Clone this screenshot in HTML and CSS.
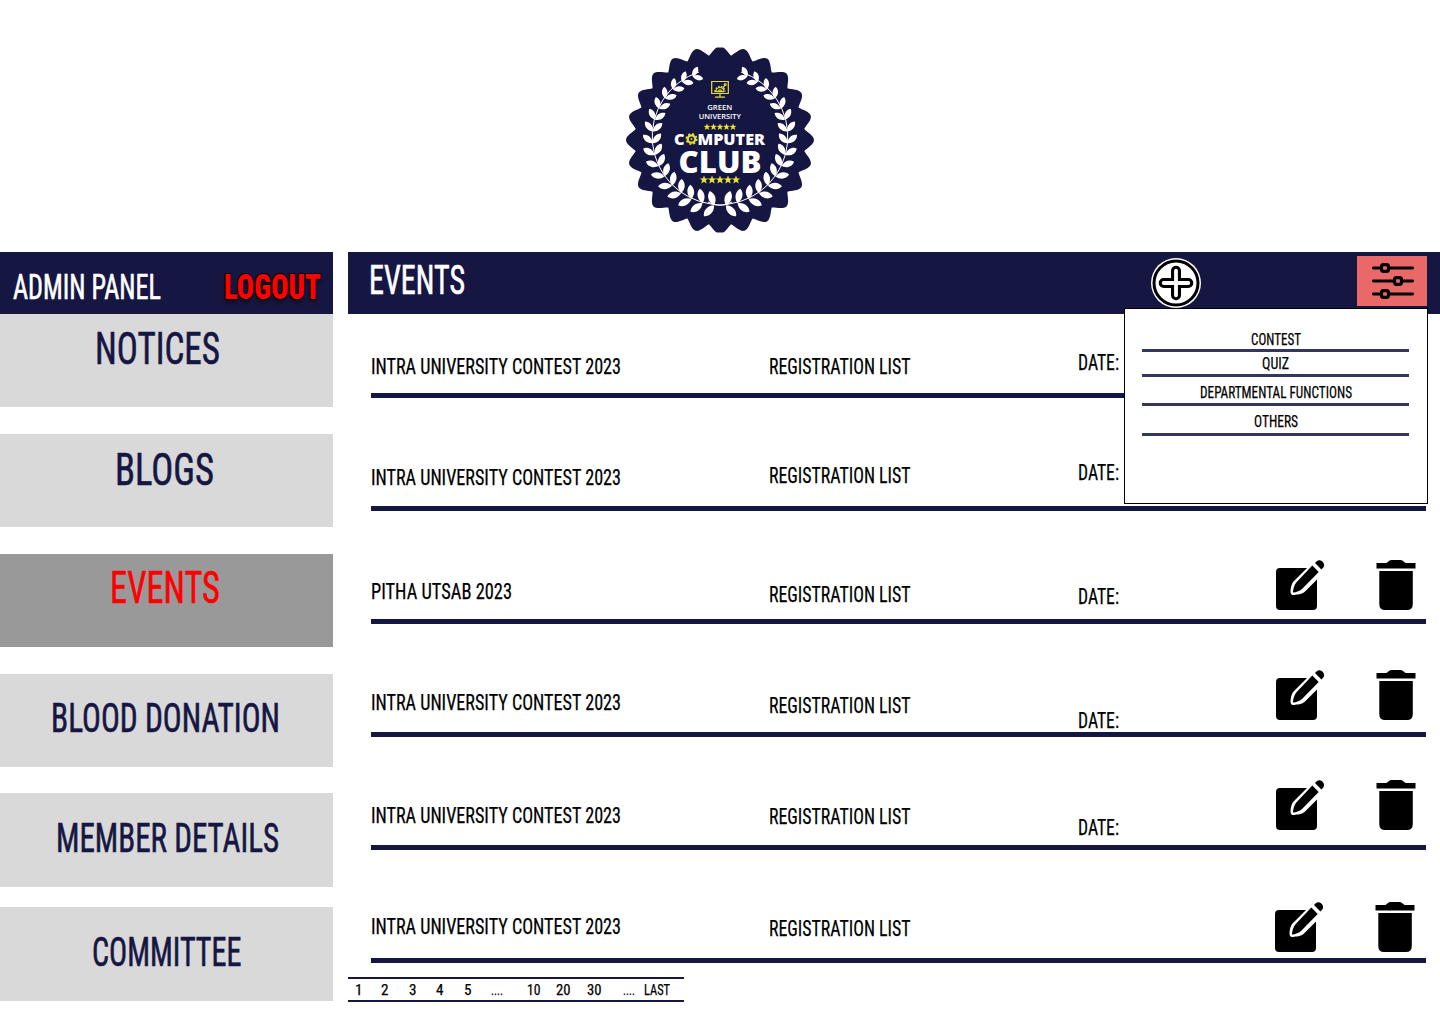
FILE: index.html
```html
<!DOCTYPE html>
<html lang="en">
<head>
<meta charset="utf-8">
<title>Computer Club – Events</title>
<link rel="stylesheet" href="styles.css">
</head>
<body>
<svg class="defs" width="0" height="0" aria-hidden="true">
  <symbol id="edit" viewBox="0 0 50 50">
    <path d="M4 8H31L17 22C15 25 14.500 29 14.500 32C15 35.500 17.500 35.500 20 34.500C23 34.500 26 34 28.500 32L41 19.500V46Q41 50 37 50H4Q0 50 0 46V12Q0 8 4 8Z"/>
    <path d="M36.300 5.500L42.700 11.900L26.500 28.500C24 31 20.500 32.300 16.900 32.500C17.200 28.700 18.200 25.200 20.500 22.200Z"/>
    <path d="M39 2.900L41 1.100C44.500-1.600 50 3.500 47.400 7.300L45.400 9.400Z"/>
  </symbol>
  <symbol id="trash" viewBox="0 0 40 50">
    <path d="M.500 3H10.500L13 .900Q14 0 15.500 0H24.500Q26 0 27 .900L29.500 3H39.500V8.500H.500Z"/>
    <path d="M3.300 11H36.800V44Q36.800 50 31 50H9Q3.300 50 3.300 44Z"/>
  </symbol>
  <symbol id="star" viewBox="-5 -5 10 10">
    <path d="M0-5L1.300-1.600L4.800-1.500L2 .300L3 4L0 2L-3 4L-2 .300L-4.800-1.500L-1.300-1.600Z"/>
  </symbol>
</svg>

<header class="brand">
  <svg class="logo" width="192" height="192" viewBox="-96 -96 192 192">
    <clipPath id="trim"><rect x="-96" y="-92.500" width="192" height="185"/></clipPath>
    <path id="seal" fill="#161642" clip-path="url(#trim)"/>
    <g id="laurel" fill="#fff"></g>
    <g fill="none" stroke="#fff" stroke-width="1">
      <path d="M-21-68A68 68 0 0 0-9 64Q3 67 12 62"/>
      <path d="M21-68A68 68 0 0 1 9 64Q-3 67-12 62"/>
    </g>
    <g fill="none" stroke="#e3df35" stroke-width="1.200">
      <path d="M-8.300-58.500H8.300V-46.500H-8.300ZM0-46.500V-43M-5-42.800H5"/>
      <path d="M-5.500-48.300H4M-4-48.500A4 4 0 0 1 4-48.500M-1.600-48.500A1.600 1.600 0 0 1 1.600-48.500"/>
      <path stroke-width="1.500" stroke-dasharray="1.500 1.400" d="M-5-48.500A5 5 0 0 1 5-48.500"/>
      <circle cx="5.200" cy="-55.500" r="1"/><path d="M3-52L4.700-54.600"/>
    </g>
    <g class="logo-text" fill="#fff">
      <text class="small" x="-12.800" y="-30.500" textLength="25" lengthAdjust="spacingAndGlyphs">GREEN</text>
      <text class="small" x="-21.300" y="-21.400" textLength="42.300" lengthAdjust="spacingAndGlyphs">UNIVERSITY</text>
      <text class="mid" x="-46" y="5.300" textLength="10.500" lengthAdjust="spacingAndGlyphs">C</text>
      <text class="mid" x="-22.500" y="5.300" textLength="67.500" lengthAdjust="spacingAndGlyphs">MPUTER</text>
      <text class="big" x="-41.500" y="32.700" textLength="83" lengthAdjust="spacingAndGlyphs">CLUB</text>
    </g>
    <g fill="none" stroke="#e3df35">
      <circle cx="-28.500" cy="-1" r="3.700" stroke-width="2.200"/>
      <circle cx="-28.500" cy="-1" r="5.200" stroke-width="1.600" stroke-dasharray="2 2.084"/>
      <circle cx="-28.500" cy="-1" r="1" fill="#e3df35" stroke="none"/>
    </g>
    <g fill="#e9e52f" id="stars"></g>
  </svg>
</header>

<div class="layout">
  <nav class="side">
    <div class="side-head">
      <span class="fit admin">ADMIN PANEL</span>
      <span class="fit logout">LOGOUT</span>
    </div>
    <a class="item notices"><span class="fit">NOTICES</span></a>
    <a class="item blogs"><span class="fit">BLOGS</span></a>
    <a class="item current"><span class="fit">EVENTS</span></a>
    <a class="item blood"><span class="fit">BLOOD DONATION</span></a>
    <a class="item member"><span class="fit">MEMBER DETAILS</span></a>
    <a class="item committee"><span class="fit">COMMITTEE</span></a>
  </nav>

  <main class="main">
    <div class="bar">
      <h1 class="fit title">EVENTS</h1>
      <svg class="add" width="50" height="50" viewBox="-25 -25 50 50">
        <circle r="25" fill="#fff"/>
        <circle r="22" fill="none" stroke="#000" stroke-width="3"/>
        <path d="M0-12.300V12.300M-12.300 0H12.300" stroke="#000" stroke-width="10" stroke-linecap="round"/>
        <path d="M0-12.300V12.300M-12.300 0H12.300" stroke="#fff" stroke-width="3.800" stroke-linecap="round"/>
      </svg>
      <div class="filter">
        <svg width="70" height="50" viewBox="0 0 70 50" fill="#e96868" stroke="#000" stroke-linecap="round">
          <path stroke-width="2.800" d="M16.400 12H55.600M16.400 25H55.600M16.400 38H55.600"/>
          <g stroke-width="3.200">
            <rect x="24.500" y="8.700" width="7" height="6.600" rx="2"/>
            <rect x="37.500" y="21.700" width="7" height="6.600" rx="2"/>
            <rect x="24.500" y="34.700" width="7" height="6.600" rx="2"/>
          </g>
        </svg>
      </div>
      <div class="menu">
        <div class="option contest"><span class="fit">CONTEST</span></div>
        <div class="option quiz"><span class="fit">QUIZ</span></div>
        <div class="option dept"><span class="fit">DEPARTMENTAL FUNCTIONS</span></div>
        <div class="option others"><span class="fit">OTHERS</span></div>
      </div>
    </div>

    <div class="rows">
      <div class="row r1"><span class="fit name">INTRA UNIVERSITY CONTEST 2023</span><span class="fit reg">REGISTRATION LIST</span><span class="fit date">DATE:</span></div>
      <div class="row r2"><span class="fit name">INTRA UNIVERSITY CONTEST 2023</span><span class="fit reg">REGISTRATION LIST</span><span class="fit date">DATE:</span></div>
      <div class="row r3"><span class="fit name short">PITHA UTSAB 2023</span><span class="fit reg">REGISTRATION LIST</span><span class="fit date">DATE:</span><svg class="edit"><use href="#edit"/></svg><svg class="trash"><use href="#trash"/></svg></div>
      <div class="row r4"><span class="fit name">INTRA UNIVERSITY CONTEST 2023</span><span class="fit reg">REGISTRATION LIST</span><span class="fit date">DATE:</span><svg class="edit"><use href="#edit"/></svg><svg class="trash"><use href="#trash"/></svg></div>
      <div class="row r5"><span class="fit name">INTRA UNIVERSITY CONTEST 2023</span><span class="fit reg">REGISTRATION LIST</span><span class="fit date">DATE:</span><svg class="edit"><use href="#edit"/></svg><svg class="trash"><use href="#trash"/></svg></div>
      <div class="row r6"><span class="fit name">INTRA UNIVERSITY CONTEST 2023</span><span class="fit reg">REGISTRATION LIST</span><span></span><svg class="edit"><use href="#edit"/></svg><svg class="trash"><use href="#trash"/></svg></div>
    </div>

    <div class="pages">
      <span class="fit">1</span><span class="fit">2</span><span class="fit">3</span><span class="fit">4</span><span class="fit">5</span><span class="fit">....</span><span class="fit">10</span><span class="fit">20</span><span class="fit">30</span><span class="fit">....</span><span class="fit">LAST</span>
    </div>
  </main>
</div>
<script src="script.js"></script>
</body>
</html>
```
FILE: styles.css
```css
* { box-sizing: border-box; }

body {
  margin: 0;
  height: 1024px;
  overflow: hidden;
  background: #fff;
  color: #000;
  font-family: Roboto, "Liberation Sans", sans-serif;
  font-stretch: 75%;
}

.defs { position: absolute; }

/* Text squeezed horizontally to the width of its own box */
.fit {
  display: block;
  white-space: nowrap;
  transform-origin: 0 0;
  -webkit-text-stroke: .25px currentColor;
}

.brand { height: 252px; padding: 43.500px 0 0 623.600px; }
.logo { display: block; }
.logo-text { font-family: "Open Sans", sans-serif; font-stretch: 100%; }
.small { font-size: 7.600px; font-weight: 600; }
.mid { font-size: 16.500px; font-weight: 800; }
.big { font-size: 29.500px; font-weight: 800; }

.layout { display: grid; grid-template-columns: 333px 1092px; gap: 15px; }

/* Sidebar */
.side { display: flex; flex-direction: column; }
.side-head {
  display: flex;
  height: 62px;
  padding: 20px 0 0 13px;
  background: #161642;
  color: #fff;
  font-size: 34.500px;
  line-height: 30px;
}
.side .fit, .title { -webkit-text-stroke-width: .6px; }
.admin { width: 148px; }
.side .logout {
  width: 97px;
  margin-left: 63px;
  color: #f00;
  font-weight: 900;
  -webkit-text-stroke: 2px #000;
  paint-order: stroke fill;
  text-shadow: 0 4px 4px rgba(0, 0, 0, .4);
}
.item {
  height: 93px;
  margin-bottom: 27px;
  background: #d9d9d9;
  color: #161642;
  font-size: 45px;
  line-height: 40px;
}
.notices { padding: 15px 0 0 95px; }
.notices .fit { width: 125px; }
.blogs { padding: 16px 0 0 115px; }
.blogs .fit { width: 99px; }
.current { padding: 14px 0 0 110px; background: #999; color: #f00; }
.current .fit { width: 110px; }
.blood, .member, .committee { font-size: 40px; }
.blood { padding: 24.500px 0 0 51px; margin-bottom: 26px; }
.blood .fit { width: 229px; }
.member { height: 94px; padding: 25.500px 0 0 55.500px; margin-bottom: 20px; }
.member .fit { width: 223px; }
.committee { height: 94px; padding: 25.500px 0 0 92px; margin-bottom: 0; }
.committee .fit { width: 149.500px; }

/* Title bar */
.bar {
  position: relative;
  display: flex;
  height: 62px;
  padding-left: 21px;
  background: #161642;
}
.title {
  width: 96px;
  margin: 8.500px 0 0;
  color: #fff;
  font-size: 40px;
  font-weight: 400;
  line-height: 40px;
}
.add { margin: 6px 0 0 686px; }
.filter { height: 50px; margin: 4px 0 0 156px; background: #e96868; }
.filter svg { display: block; }
.menu {
  position: absolute;
  top: 56px;
  left: 776px;
  width: 304px;
  height: 196px;
  padding: 21px 18px 0 17px;
  border: 1px solid #000;
  background: #fff;
  font-size: 17.200px;
  line-height: 19px;
}
.option { display: flex; justify-content: center; border-bottom: 3px solid #343660; }
.contest { height: 22px; }
.contest .fit { width: 50px; }
.quiz { height: 25px; padding-top: 2px; }
.quiz .fit { width: 27px; }
.dept { height: 29px; padding-top: 6px; }
.dept .fit { width: 152px; }
.others { height: 30px; padding-top: 6px; }
.others .fit { width: 44px; }

/* Event rows */
.rows { width: 1055px; margin-left: 23px; }
.row {
  display: grid;
  grid-template-columns: 397.500px 309px 198.500px 100px 40px;
  align-items: start;
  height: 113px;
  border-bottom: 5px solid #161642;
  font-size: 22.800px;
  line-height: 21px;
}
.name { width: 250px; }
.short { width: 141px; }
.reg { width: 141.500px; }
.date { width: 41px; }
.edit { width: 50px; height: 50px; }
.trash { width: 40px; height: 50px; }
.r1 { height: 84px; }
.r1 .name, .r1 .reg { margin-top: 42px; }
.r1 .date { margin-top: 38px; }
.r2 .name { margin-top: 69px; }
.r2 .reg { margin-top: 67px; }
.r2 .date { margin-top: 64px; }
.r3 .name { margin-top: 70px; }
.r3 .reg { margin-top: 73px; }
.r3 .date { margin-top: 75px; }
.r3 svg { margin-top: 49px; }
.r4 .name { margin-top: 68px; }
.r4 .reg { margin-top: 71px; }
.r4 .date { margin-top: 86px; }
.r4 svg { margin-top: 46px; }
.r5 .name { margin-top: 68px; }
.r5 .reg { margin-top: 69px; }
.r5 .date { margin-top: 80px; }
.r5 svg { margin-top: 43px; }
.r6 .name { margin-top: 66px; }
.r6 .reg { margin-top: 68px; }
.r6 svg { margin: 52px 0 0 -1px; }

/* Pagination */
.pages {
  display: grid;
  grid-template-columns: 26.500px 27.500px 27.500px 28px 26.500px 36px 29px 31px 36px 21px 26px;
  width: 336px;
  height: 25px;
  margin-top: 14px;
  padding: 2px 0 0 6.500px;
  border: solid #161642;
  border-width: 2px 0;
  font-size: 15.500px;
  line-height: 19px;
}
.pages .fit { width: 7.500px; }
.pages .fit:nth-child(6), .pages .fit:nth-child(10) { width: 12px; }
.pages .fit:nth-child(7) { width: 13.500px; }
.pages .fit:nth-child(8), .pages .fit:nth-child(9) { width: 14.500px; }
.pages .fit:nth-child(11) { width: 26px; }
```
FILE: script.js
```js
// Squeeze each label to its box width
document.querySelectorAll('.fit').forEach(function (el) {
  var range = document.createRange();
  range.selectNodeContents(el);
  var natural = range.getBoundingClientRect().width;
  var box = parseFloat(getComputedStyle(el).width);
  el.style.transform = 'scaleX(' + box / natural + ')';
});

// Scalloped seal with 24 rounded points
(function () {
  var pt = function (deg, r) {
    var a = deg * Math.PI / 180;
    return (r * Math.sin(a)).toFixed(2) + ' ' + (-r * Math.cos(a)).toFixed(2);
  };
  var d = 'M' + pt(-7.5, 85);
  for (var i = 0; i < 24; i++) {
    var a = i * 15;
    d += 'C' + pt(a - 5.2, 87.5) + ' ' + pt(a - 2.8, 94) + ' ' + pt(a, 94);
    d += 'C' + pt(a + 2.8, 94) + ' ' + pt(a + 5.2, 87.5) + ' ' + pt(a + 7.5, 85);
  }
  document.getElementById('seal').setAttribute('d', d + 'Z');

  // Laurel: paired leaves along both stems, larger and more open towards the bottom
  var leaves = '';
  var n = 16;
  for (var side = -1; side <= 1; side += 2) {
    for (var k = 0; k < n; k++) {
      var t = k / (n - 1);
      var deg = 24 + 151 * t;
      var s = 11 + 4 * t;
      var rad = deg * Math.PI / 180;
      var x = side * 67.5 * Math.sin(rad), y = -2 - 67.5 * Math.cos(rad);
      // the lean is towards the centre first, then away from it
      [-side * -1 * (38 + 30 * t * t), -side * (38 + 14 * t)].forEach(function (lean) {
        leaves += '<path transform="translate(' + x.toFixed(2) + ' ' + y.toFixed(2) + ') rotate(' +
          (side * (deg - 90) - lean) + ') scale(' + s.toFixed(2) + ')" d="M0 0C-.34-.35-.28-.78 0-1C.28-.78 .34-.35 0 0Z"/>';
      });
    }
  }
  document.getElementById('laurel').innerHTML = leaves;

  var stars = '';
  [[-13, 6.5, 7.2], [39.9, 8, 9]].forEach(function (r) {
    for (var j = -2; j <= 2; j++) {
      stars += '<use href="#star" x="' + (j * r[1] - r[2] / 2) + '" y="' + (r[0] - r[2] / 2) +
        '" width="' + r[2] + '" height="' + r[2] + '"/>';
    }
  });
  document.getElementById('stars').innerHTML = stars;
})();
```
